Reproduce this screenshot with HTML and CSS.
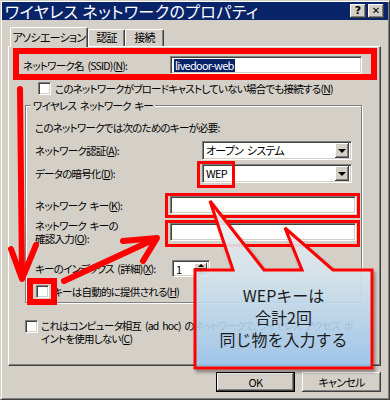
FILE: index.html
```html
<!DOCTYPE html>
<html lang="ja">
<head>
    <meta charset="UTF-8">
    <meta name="viewport" content="width=device-width, initial-scale=1.0">
    <title>ワイヤレス ネットワークのプロパティ</title>
    <link rel="stylesheet" href="styles.css">
</head>
<body>
    <div class="window">
        <div class="titlebar">
            <span class="titlebar__text">ワイヤレス ネットワークのプロパティ</span>
            <span class="titlebar__btn">?</span>
            <span class="titlebar__btn titlebar__btn--close">✕</span>
        </div>
        <div class="tabs">
            <span class="tab tab--active">アソシエーション</span>
            <span class="tab tab--auth">認証</span>
            <span class="tab tab--conn">接続</span>
        </div>
        <div class="panel">
            <div class="row row--ssid">
                <span class="label label--ssid">ネットワーク名 (SSID)(<u>N</u>):</span>
                <span class="edit edit--ssid"><span class="selected">livedoor-web</span></span>
            </div>
            <div class="check check--broadcast">
                <span class="check__box"></span>
                <span>このネットワークがブロードキャストしていない場合でも接続する(<u>N</u>)</span>
            </div>
            <div class="group">
                <div class="group__title">ワイヤレス ネットワーク キー</div>
                <div class="group__text">このネットワークでは次のためのキーが必要:</div>
                <div class="row row--auth">
                    <span class="label label--combo">ネットワーク認証(<u>A</u>):</span>
                    <span class="combo"><span class="combo__value">オープン システム</span><span class="combo__btn"></span></span>
                </div>
                <div class="row row--enc">
                    <span class="label label--combo">データの暗号化(<u>D</u>):</span>
                    <span class="combo"><span class="combo__value">WEP</span><span class="combo__btn"></span></span>
                </div>
                <div class="row row--key">
                    <span class="label label--key">ネットワーク キー(<u>K</u>):</span>
                    <span class="edit edit--key"></span>
                </div>
                <div class="row row--confirm">
                    <span class="label label--key">ネットワーク キーの<br>確認入力(<u>O</u>):</span>
                    <span class="edit edit--key"></span>
                </div>
                <div class="row row--index">
                    <span class="label label--index">キーのインデックス (詳細)(<u>X</u>):</span>
                    <span class="spin">
                        <span class="spin__value">1</span>
                        <span class="spin__btns">
                            <span class="spin__btn spin__btn--up"></span>
                            <span class="spin__btn spin__btn--down"></span>
                        </span>
                    </span>
                </div>
                <div class="check check--auto">
                    <span class="check__box"></span>
                    <span>キーは自動的に提供される(<u>H</u>)</span>
                </div>
            </div>
            <div class="check check--adhoc">
                <span class="check__box"></span>
                <span>これはコンピュータ相互 (ad hoc) のネットワークで、ワイヤレス アクセス ポ<br>イントを使用しない(<u>C</u>)</span>
            </div>
        </div>
        <div class="buttons">
            <span class="button button--default">OK</span>
            <span class="button">キャンセル</span>
        </div>
    </div>

    <!-- red annotations drawn over the dialog -->
    <svg class="marks" width="390" height="400" viewBox="0 0 390 400">
        <defs>
            <linearGradient id="balloon" x1="0" y1="200" x2="0" y2="368" gradientUnits="userSpaceOnUse">
                <stop offset="0" stop-color="#f6f9f6"/>
                <stop offset="0.45" stop-color="#d8e8f0"/>
                <stop offset="1" stop-color="#9cc8f0"/>
            </linearGradient>
            <filter id="shadow" x="-10%" y="-10%" width="130%" height="130%">
                <feDropShadow dx="2" dy="3" stdDeviation="1.5" flood-color="#000" flood-opacity="0.35"/>
            </filter>
        </defs>
        <g fill="none" stroke="#ff0000">
            <rect x="16" y="51" width="358" height="26" stroke-width="6"/>
            <rect x="198.5" y="162.5" width="35" height="24" stroke-width="3"/>
            <rect x="166.5" y="194.5" width="192" height="22" stroke-width="3"/>
            <rect x="166.5" y="221.5" width="192" height="24" stroke-width="3"/>
            <rect x="30" y="281" width="24" height="21" stroke-width="6"/>
        </g>
        <g fill="none" stroke="#ff0000" stroke-width="6" stroke-linecap="round" stroke-linejoin="round">
            <path d="M20 89 L22 276"/>
            <path d="M11 249 L22 279 L36 245"/>
            <path d="M64 281 L155 239"/>
            <path d="M123 241 L157 238 L143 261"/>
        </g>
        <path class="balloon"
              d="M195 270 L233 270 L210 201 L264 270 L302 270 L285 228 L333 270 L372 270 L372 368 L195 368 Z"
              fill="url(#balloon)" fill-opacity="0.86" stroke="#ff0000" stroke-width="3"
              stroke-linejoin="miter" filter="url(#shadow)"/>
    </svg>
    <div class="balloon-text">WEPキーは<br>合計2回<br>同じ物を入力する</div>
</body>
</html>
```

FILE: styles.css
```css
*, *::before, *::after {
    box-sizing: border-box;
}
body {
    margin: 0;
    background-color: #d4d0c8;
    font-family: "Noto Sans CJK JP", "Noto Sans", sans-serif;
    font-size: 10.5px;
    color: #000;
    font-feature-settings: "palt";
    letter-spacing: -0.75px;
    word-spacing: 2px;
}
u {
    text-decoration-thickness: 1px;
    text-underline-offset: 1px;
}
.window {
    width: 390px;
    height: 400px;
    padding: 1px;
    overflow: hidden;
    background-color: #d4d0c8;
    border: 1px solid;
    border-color: #d4d0c8 #404040 #404040 #d4d0c8;
    box-shadow: inset 1px 1px #fff, inset -1px -1px #808080;
}
.titlebar {
    display: flex;
    align-items: center;
    height: 18px;
    padding: 0 4px 0 3px;
    background-color: #0a246a;
    color: #fff;
}
.titlebar__text {
    flex: 1;
    font-size: 16px;
    line-height: 18px;
    letter-spacing: 0.4px;
    word-spacing: 0;
}
.titlebar__btn {
    width: 16px;
    height: 14px;
    background-color: #d4d0c8;
    box-shadow: inset -1px -1px #404040, inset 1px 1px #fff, inset -2px -2px #808080;
    color: #000;
    font-family: "DejaVu Sans", sans-serif;
    font-weight: bold;
    font-size: 11px;
    line-height: 14px;
    text-align: center;
    letter-spacing: 0;
}
.titlebar__btn--close {
    margin-left: 2px;
    font-size: 10px;
}
.tabs {
    display: flex;
    align-items: flex-end;
    height: 19px;
    margin: 7px 0 0 8px;
    font-size: 11px;
}
.tab {
    height: 17px;
    line-height: 15px;
    text-align: center;
    border-top: 1px solid #fff;
    border-left: 1px solid #fff;
    border-right: 1px solid #404040;
    border-radius: 2px 2px 0 0;
    box-shadow: inset -1px 0 #808080;
}
.tab--active {
    position: relative;
    z-index: 1;
    width: 78px;
    height: 20px;
    margin-bottom: -1px;
    line-height: 18px;
    background-color: #d4d0c8;
}
.tab--auth {
    width: 37px;
}
.tab--conn {
    width: 39px;
}
.panel {
    width: 373px;
    height: 320px;
    margin-left: 6px;
    padding: 9px 0 0 14px;
    border: 1px solid;
    border-color: #fff #404040 #404040 #fff;
    box-shadow: inset -1px -1px #808080;
}
.row {
    display: flex;
    align-items: center;
}
.label {
    flex: none;
    white-space: nowrap;
    line-height: 13px;
}
.label--ssid {
    width: 147px;
}
.label--combo {
    width: 167px;
}
.label--key {
    width: 135px;
}
.label--index {
    width: 137px;
}
.row--ssid {
    height: 18px;
}
.edit {
    display: flex;
    align-items: center;
    height: 18px;
    padding-left: 3px;
    background-color: #fff;
    border: 1px solid;
    border-color: #808080 #fff #fff #808080;
    box-shadow: inset 1px 1px #404040, inset -1px -1px #d4d0c8;
}
.edit--ssid {
    width: 192px;
    font-size: 11px;
}
.edit--key {
    width: 186px;
}
.selected {
    padding: 0 1px;
    background-color: #0a246a;
    color: #fff;
    line-height: 13px;
}
.check {
    display: flex;
    align-items: center;
    white-space: nowrap;
}
.check__box {
    flex: none;
    width: 13px;
    height: 13px;
    margin-right: 4px;
    background-color: #fff;
    border: 1px solid;
    border-color: #808080 #fff #fff #808080;
    box-shadow: inset 1px 1px #404040, inset -1px -1px #d4d0c8;
}
.check--broadcast {
    height: 13px;
    margin: 8px 0 0 15px;
}
.group {
    width: 337px;
    margin: 10px 0 0 2px;
    padding: 0 0 4px 9px;
    border: 1px solid #808080;
    box-shadow: inset 1px 1px #fff, 1px 1px #fff;
}
.group__title {
    width: fit-content;
    margin: -7px 0 0 -4px;
    padding: 0 2px;
    line-height: 13px;
    background-color: #d4d0c8;
}
.group__text {
    margin-top: 9px;
    line-height: 14px;
}
.row--auth {
    height: 19px;
    margin-top: 6px;
}
.row--enc {
    height: 19px;
    margin-top: 4px;
}
.combo {
    display: flex;
    align-items: center;
    width: 150px;
    height: 19px;
    padding: 2px;
    background-color: #fff;
    border: 1px solid;
    border-color: #808080 #fff #fff #808080;
    box-shadow: inset 1px 1px #404040, inset -1px -1px #d4d0c8;
    font-size: 11px;
}
.combo__value {
    flex: 1;
    padding-left: 1px;
    line-height: 13px;
}
.combo__btn {
    display: flex;
    align-items: center;
    justify-content: center;
    width: 14px;
    height: 15px;
    background-color: #d4d0c8;
    box-shadow: inset -1px -1px #404040, inset 1px 1px #fff, inset -2px -2px #808080;
}
.combo__btn::after {
    content: "";
    border-top: 4px solid #000;
    border-left: 4px solid transparent;
    border-right: 4px solid transparent;
    margin-top: 1px;
}
.row--key {
    height: 18px;
    margin-top: 13px;
}
.row--confirm {
    height: 27px;
    margin-top: 4px;
}
.row--index {
    height: 17px;
    margin-top: 15px;
}
.spin {
    display: flex;
    width: 38px;
    height: 17px;
    padding: 2px 2px 2px 3px;
    background-color: #fff;
    border: 1px solid;
    border-color: #808080 #fff #fff #808080;
    box-shadow: inset 1px 1px #404040, inset -1px -1px #d4d0c8;
    font-size: 11px;
}
.spin__value {
    flex: 1;
    line-height: 13px;
}
.spin__btns {
    display: flex;
    flex-direction: column;
    width: 13px;
}
.spin__btn {
    flex: 1;
    display: flex;
    align-items: center;
    justify-content: center;
    background-color: #d4d0c8;
    box-shadow: inset -1px -1px #404040, inset 1px 1px #fff;
}
.spin__btn--up::after {
    content: "";
    border-bottom: 3px solid #000;
    border-left: 3px solid transparent;
    border-right: 3px solid transparent;
}
.spin__btn--down::after {
    content: "";
    border-top: 3px solid #000;
    border-left: 3px solid transparent;
    border-right: 3px solid transparent;
}
.check--auto {
    height: 13px;
    margin: 8px 0 0 1px;
}
.check--adhoc {
    align-items: flex-start;
    margin: 17px 0 0 2px;
    line-height: 12.5px;
}
.check--adhoc .check__box {
    margin-right: 3px;
}
.buttons {
    display: flex;
    justify-content: flex-end;
    gap: 7px;
    margin: 6px 7px 0 0;
    font-size: 11px;
}
.button {
    width: 79px;
    height: 20px;
    line-height: 20px;
    text-align: center;
    background-color: #d4d0c8;
    box-shadow: inset -1px -1px #404040, inset 1px 1px #fff, inset -2px -2px #808080;
}
.button--default {
    border: 1px solid #000;
    line-height: 18px;
}
.marks {
    position: absolute;
    top: 0;
    left: 0;
}
.balloon-text {
    position: absolute;
    top: 272px;
    left: 195px;
    width: 177px;
    height: 96px;
    display: flex;
    align-items: center;
    justify-content: center;
    padding-bottom: 6px;
    text-align: center;
    font-size: 16px;
    line-height: 22px;
    letter-spacing: 0;
    word-spacing: 0;
    font-feature-settings: normal;
    color: #1c1c1c;
}
```
